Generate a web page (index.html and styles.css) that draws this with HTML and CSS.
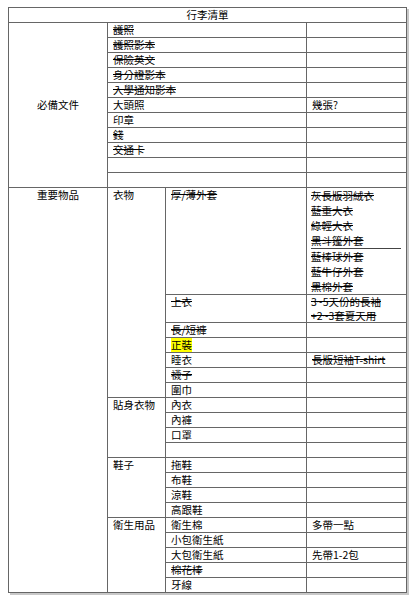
FILE: index.html
```html
<!DOCTYPE html>
<html lang="zh-Hant">
<head>
<meta charset="utf-8">
<title>行李清單</title>
<link rel="stylesheet" href="styles.css">
</head>
<body>
<div class="page">
<table class="sheet">
<colgroup><col class="c1"><col class="c2"><col class="c3"><col class="c4"></colgroup>
<tr><td colspan="4" class="title">行李清單</td></tr>
<tr><td rowspan="11" class="cat mid">必備文件</td><td colspan="2" class="s">護照</td><td></td></tr>
<tr><td colspan="2" class="s">護照影本</td><td></td></tr>
<tr><td colspan="2" class="s">保險英文</td><td></td></tr>
<tr><td colspan="2" class="s">身分證影本</td><td></td></tr>
<tr><td colspan="2" class="s">入學通知影本</td><td></td></tr>
<tr><td colspan="2">大頭照</td><td>幾張?</td></tr>
<tr><td colspan="2">印章</td><td></td></tr>
<tr><td colspan="2" class="s">錢</td><td></td></tr>
<tr><td colspan="2" class="s">交通卡</td><td></td></tr>
<tr><td colspan="2"></td><td></td></tr>
<tr><td colspan="2"></td><td></td></tr>
<tr><td rowspan="20" class="cat top">重要物品</td><td rowspan="7" class="sub">衣物</td><td class="top s">厚/薄外套</td>
<td class="list"><div class="blk"><div class="s">灰長版羽絨衣</div><div class="s">藍重大衣</div><div class="s">綠輕大衣</div><div class="s">黑斗篷外套</div></div><div class="blk2"><div class="s">藍棒球外套</div><div class="s">藍牛仔外套</div><div class="s">黑棉外套</div></div></td></tr>
<tr><td class="top s">上衣</td><td class="list two"><div class="s">3~5天份的長袖</div><div class="s">+2~3套夏天用</div></td></tr>
<tr><td class="s">長/短褲</td><td></td></tr>
<tr><td><span class="hl">正裝</span></td><td></td></tr>
<tr><td>睡衣</td><td class="s">長版短袖T-shirt</td></tr>
<tr><td class="s">襪子</td><td></td></tr>
<tr><td>圍巾</td><td></td></tr>
<tr><td rowspan="4" class="sub">貼身衣物</td><td>內衣</td><td></td></tr>
<tr><td>內褲</td><td></td></tr>
<tr><td>口罩</td><td></td></tr>
<tr><td></td><td></td></tr>
<tr><td rowspan="4" class="sub">鞋子</td><td>拖鞋</td><td></td></tr>
<tr><td>布鞋</td><td></td></tr>
<tr><td>涼鞋</td><td></td></tr>
<tr><td>高跟鞋</td><td></td></tr>
<tr><td rowspan="5" class="sub">衛生用品</td><td>衛生棉</td><td>多帶一點</td></tr>
<tr><td>小包衛生紙</td><td></td></tr>
<tr><td>大包衛生紙</td><td>先帶1-2包</td></tr>
<tr><td class="s">棉花棒</td><td></td></tr>
<tr><td>牙線</td><td></td></tr>
</table>
</div>
</body>
</html>
```
FILE: styles.css
```css
html, body {
  margin: 0;
  background: #ffffff;
}
.page {
  padding: 7px 8px;
}
.sheet {
  border-collapse: collapse;
  table-layout: fixed;
  width: 398px;
  font-family: "Noto Sans CJK TC", "Liberation Sans", sans-serif;
  font-size: 10.5px;
  line-height: 14px;
  color: #000;
  box-shadow: 2px 2px 0 #c8c8c8;
}
.c1 { width: 99px; }
.c2 { width: 58px; }
.c3 { width: 141px; }
.c4 { width: 100px; }
.sheet td {
  border: 1px solid #666;
  padding: 0 5px;
  height: 14px;
  vertical-align: middle;
  white-space: nowrap;
  overflow: hidden;
}
.sheet td.title {
  text-align: center;
}
.sheet td.cat {
  text-align: center;
  padding: 0;
}
.sheet td.mid { vertical-align: middle; }
.sheet td.top { vertical-align: top; }
.sheet td.sub { vertical-align: top; }
.sheet td.list {
  vertical-align: top;
  padding: 0 5px 0 4px;
  line-height: 15px;
}
.sheet td.list.two {
  line-height: 13.5px;
}
.blk {
  border-bottom: 1px solid #444;
}
.s {
  text-decoration: line-through;
}
.hl {
  background: #ffff00;
}
```
